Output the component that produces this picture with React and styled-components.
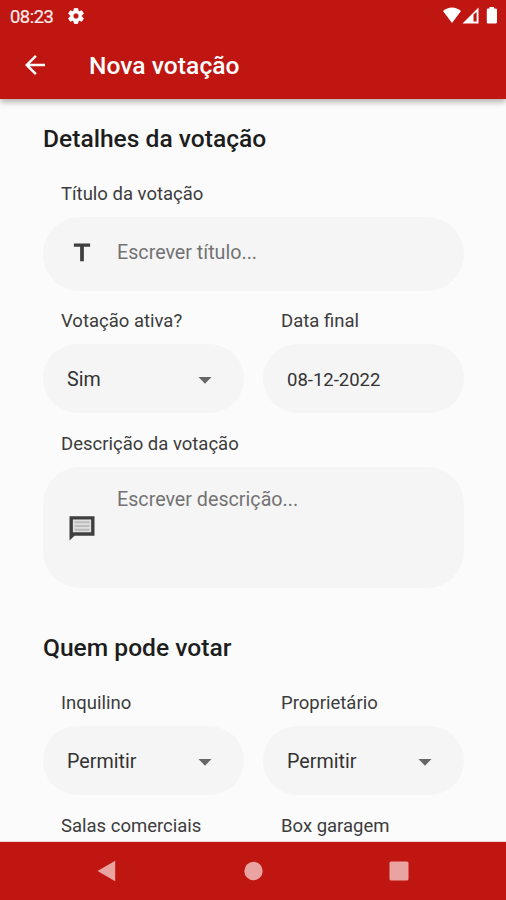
import React from "react";
import styled, { createGlobalStyle } from "styled-components";

const Global = createGlobalStyle`
  * { box-sizing: border-box; }
  body { margin: 0; background: #fbfbfb; font-family: Roboto, sans-serif; }
`;

const Screen = styled.div`
  display: flex;
  flex-direction: column;
  width: 506px;
  height: 900px;
  overflow: hidden;
  background: #fbfbfb;
`;

const Header = styled.header`
  flex: none;
  height: 98.5px;
  background: #c01611;
  color: #fff;
  z-index: 1;
  box-shadow: 0 3px 6px rgba(0, 0, 0, 0.3);
`;

const StatusBar = styled.div`
  display: flex;
  align-items: center;
  height: 32px;
  padding: 0 6px 0 10px;
`;

const Clock = styled.span`
  width: 58px;
  font-size: 18.4px;
  letter-spacing: -0.5px;
  color: #fdeceb;
  -webkit-text-stroke: 0.2px currentColor;
`;

const StatusIcons = styled.div`
  display: flex;
  align-items: center;
  margin-left: auto;
`;

const AppBar = styled.div`
  display: flex;
  align-items: center;
  height: 66px;
  padding-left: 20px;
`;

const Title = styled.h1`
  margin: 1px 0 0 39px;
  font-size: 24.6px;
  line-height: 30px;
  font-weight: 500;
  letter-spacing: 0.04px;
`;

const Content = styled.main`
  flex: 1;
  min-height: 0;
  overflow: hidden;
  padding: 25.5px 42px 0 43px;
`;

const SectionTitle = styled.h2`
  margin: ${(p) => p.$top || 0}px 0 30px;
  font-size: 24.6px;
  line-height: 30px;
  font-weight: 500;
  letter-spacing: 0;
  color: #1d1d1d;
`;

const Row = styled.div`
  display: grid;
  grid-template-columns: ${(p) => (p.$split ? "1fr 1fr" : "1fr")};
  column-gap: 19px;
  margin-bottom: ${(p) => p.$gap}px;
`;

const Label = styled.div`
  height: 20px;
  margin: 0 0 13px 18px;
  font-size: 18.5px;
  line-height: 20px;
  color: #3c3c3c;
  white-space: nowrap;
`;

const Box = styled.div`
  display: flex;
  align-items: ${(p) => (p.$multiline ? "flex-start" : "center")};
  height: ${(p) => p.$height || 69}px;
  padding: 0 32px 0 24px;
  padding-top: ${(p) => (p.$multiline ? 20 : 0)}px;
  border-radius: 37px;
  background: #f5f5f5;
  color: #333;
`;

const Value = styled.span`
  flex: 1;
  margin-top: 2px;
  font-size: ${(p) => (p.$compact ? 18.5 : 19.7)}px;
  line-height: 24px;
`;

const Placeholder = styled.span`
  margin: ${(p) => p.$top || 0}px 0 0 20px;
  font-size: 19.7px;
  line-height: 24px;
  color: #737373;
`;

const BoxIcon = styled.svg`
  flex: none;
  width: 30px;
  height: 30px;
  margin-top: ${(p) => p.$top || 0}px;
  fill: #3f3f3f;
`;

const Caret = styled.svg`
  flex: none;
  width: 14px;
  height: 7px;
  margin-top: 3px;
  fill: #666;
`;

const NavBar = styled.nav`
  flex: none;
  display: grid;
  grid-template-columns: repeat(3, 146px);
  justify-content: center;
  justify-items: center;
  align-items: center;
  height: 58px;
  z-index: 1;
  background: #c01611;
  box-shadow: 0 0 1px #c01611;

  svg { fill: #e9a3a1; }
`;

function Select({ label, value }) {
  return (
    <div>
      <Label>{label}</Label>
      <Box>
        <Value>{value}</Value>
        <Caret viewBox="0 0 14 7"><path d="M0.5 0h13L7 6.7z" /></Caret>
      </Box>
    </div>
  );
}

export default function App() {
  return (
    <Screen>
      <Global />
      <Header>
        <StatusBar>
          <Clock>08:23</Clock>
          <svg width="16" height="16" viewBox="2 2 20 20" fill="#fff" stroke="#fff" strokeWidth="0.8">
            <path d="M19.14 12.94c.04-.3.06-.61.06-.94 0-.32-.02-.64-.07-.94l2.03-1.58c.18-.14.23-.41.12-.61l-1.92-3.32c-.12-.22-.37-.29-.59-.22l-2.39.96c-.5-.38-1.03-.7-1.62-.94l-.36-2.54c-.04-.24-.24-.41-.48-.41h-3.84c-.24 0-.43.17-.47.41l-.36 2.54c-.59.24-1.13.57-1.62.94l-2.39-.96c-.22-.08-.47 0-.59.22L2.74 8.87c-.12.21-.08.47.12.61l2.03 1.58c-.05.3-.09.63-.09.94s.02.64.07.94l-2.03 1.58c-.18.14-.23.41-.12.61l1.92 3.32c.12.22.37.29.59.22l2.39-.96c.5.38 1.03.7 1.62.94l.36 2.54c.05.24.24.41.48.41h3.84c.24 0 .44-.17.47-.41l.36-2.54c.59-.24 1.13-.56 1.62-.94l2.39.96c.22.08.47 0 .59-.22l1.92-3.32c.12-.22.07-.47-.12-.61l-2.01-1.58zM12 15.6c-1.98 0-3.6-1.62-3.6-3.6s1.62-3.6 3.6-3.6 3.6 1.62 3.6 3.6-1.62 3.6-3.6 3.6z" />
          </svg>
          <StatusIcons>
            <svg width="58" height="20" viewBox="0 0 58 20" fill="#fff">
              <path d="M1 5C6.200 0.300 13.800 0.300 19 5L10 17z" />
              <path d="M20.500 17.500L36.500 1.500V17.500zM31.500 8.500V15.600H34.600V6z" fillRule="evenodd" />
              <path d="M47.500 1H52V2.500H53.500Q55 2.500 55 3.700V16.300Q55 17.500 53.500 17.500H46Q44.800 17.500 44.800 16.300V3.700Q44.800 2.500 46 2.500H47.500z" />
            </svg>
          </StatusIcons>
        </StatusBar>
        <AppBar>
          <svg width="30" height="30" viewBox="0 0 24 24" fill="#fff">
            <path d="M20 11H7.830l5.590-5.590L12 4l-8 8 8 8 1.410-1.410L7.830 13H20v-2z" />
          </svg>
          <Title>Nova votação</Title>
        </AppBar>
      </Header>

      <Content>
        <SectionTitle>Detalhes da votação</SectionTitle>
        <Row $gap={20}>
          <div>
            <Label>Título da votação</Label>
            <Box $height={74}>
              <BoxIcon viewBox="0 0 24 24"><path d="M5.500 3.600v2.600h5V17.700h3V6.200h5V3.600z" /></BoxIcon>
              <Placeholder $top={-2}>Escrever título...</Placeholder>
            </Box>
          </div>
        </Row>
        <Row $split $gap={21}>
          <Select label="Votação ativa?" value="Sim" />
          <div>
            <Label>Data final</Label>
            <Box><Value $compact>08-12-2022</Value></Box>
          </div>
        </Row>
        <Row $gap={0}>
          <div>
            <Label>Descrição da votação</Label>
            <Box $multiline $height={121}>
              <BoxIcon $top={26} viewBox="0 0 24 24">
                <path d="M2 2.500h20v15.600H6L2 22zM4.700 5.200v10.200H19.300V5.200z" fillRule="evenodd" />
                <path d="M4.700 5.200h14.600v10.200H4.700z" opacity=".12" />
                <path d="M6 6.500h12v1.600H6zM6 9.500h12v1.600H6zM6 12.500h12v1.600H6z" opacity=".22" />
              </BoxIcon>
              <Placeholder $top={1}>Escrever descrição...</Placeholder>
            </Box>
          </div>
        </Row>
        <SectionTitle $top={45}>Quem pode votar</SectionTitle>
        <Row $split $gap={21}>
          <Select label="Inquilino" value="Permitir" />
          <Select label="Proprietário" value="Permitir" />
        </Row>
        <Row $split $gap={0}>
          <Label>Salas comerciais</Label>
          <Label>Box garagem</Label>
        </Row>
      </Content>

      <NavBar>
        <svg width="20" height="22" viewBox="0 0 20 22"><path d="M0.500 11L18.200 0.800V21.200z" /></svg>
        <svg width="20" height="20" viewBox="0 0 20 20"><circle cx="10.500" cy="10" r="9.200" /></svg>
        <svg width="20" height="20" viewBox="0 0 20 20"><rect x="0.500" y="0.500" width="19" height="19" rx="1.500" /></svg>
      </NavBar>
    </Screen>
  );
}
